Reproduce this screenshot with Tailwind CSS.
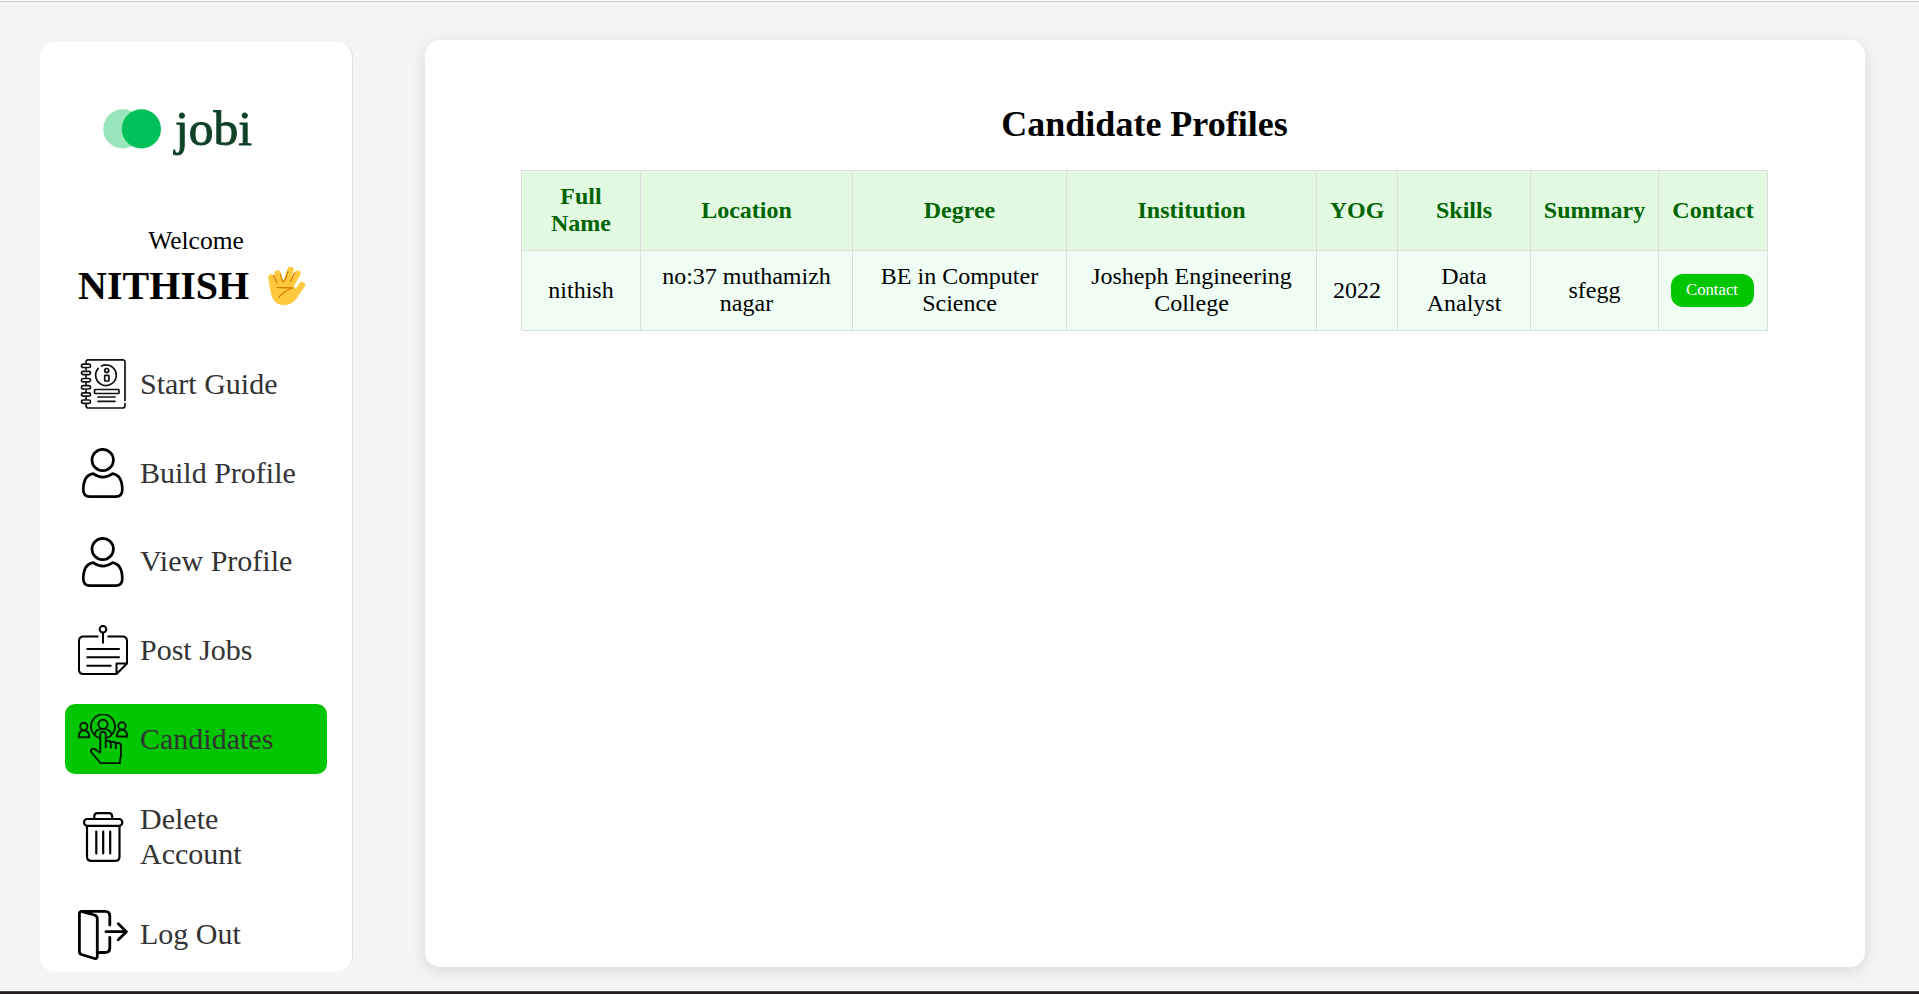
<!DOCTYPE html>
<html lang="en">
<head>
<meta charset="utf-8">
<title>Candidate Profiles</title>
<script src="https://cdn.jsdelivr.net/npm/@tailwindcss/browser@4"></script>
</head>
<body class="h-[994px] overflow-hidden bg-[#f4f4f4] font-['Liberation_Serif','Times_New_Roman',serif] text-black flex flex-col">
<div class="h-0.5 shrink-0 bg-white border-b border-[#c8c8c8]"></div>
<div class="flex flex-1 items-start pl-10">
  <aside class="mt-10 h-[930px] w-[313px] shrink-0 rounded-[15px] border-r border-[#dddddd] bg-white px-[25px]">
    <svg class="mt-[58px] ml-[33px] h-[65px] w-[165px]" viewBox="98 100 165 65">
      <circle cx="122.8" cy="128.9" r="19.6" fill="#99e6bb"/>
      <circle cx="141.4" cy="128.9" r="19.6" fill="#00c05a"/>
      <text x="175" y="144.700" font-size="49" textLength="77" lengthAdjust="spacingAndGlyphs" fill="#0f4129" stroke="#0f4129" stroke-width=".9">jobi</text>
    </svg>
    <div class="mt-[62px] text-center text-[25.500px] leading-[28px]">Welcome</div>
    <div class="mt-[7px] flex h-[46px] items-center pl-[13px]">
      <span class="pt-0.5 text-[40px] leading-[46px] font-bold">NITHISH</span>
      <svg class="ml-[17px] h-[42px] w-[42px]" viewBox="0 0 42 42" fill="none" stroke-linecap="round" stroke-linejoin="round">
        <path d="M5.500 13.500 10 25M11.500 9.500 15 21M19.500 21 24.500 6M25 21 31.500 9.500M29 31 36 21" stroke="#ffc83d" stroke-width="6.300"/>
        <path d="M2.500 14.500C3.500 24 5 31 7 35C10 39.500 13 41 18 41C24 41 28 38 31 34L34 27L28 23L26 17L17 18L8 15Z" fill="#ffc83d"/>
        <path d="M7.700 11.500 10.800 18.500M14.500 10.500 16.500 17.500 18.500 17.300 22 7.500M24.500 17.500 28.500 9" stroke="#d67d00" stroke-width="1.300"/>
        <path d="M11.300 23.300C17 24.300 22 23.300 26.500 24C21.500 26 16.500 29 13 33" stroke="#d67d00" stroke-width="1.300"/>
      </svg>
    </div>
    <nav class="mt-[41px] flex flex-col gap-[18.75px] text-[30px] leading-[34.5px] text-[#333333]">
      <a class="flex h-[70px] w-[262px] items-center gap-3 rounded-[10px] pl-[13px]">
        <svg class="h-[50px] w-[50px] shrink-0" viewBox="0 0 50 50" fill="none" stroke="#111" stroke-width="1.700" stroke-linecap="round" stroke-linejoin="round">
          <path d="M8 5V3Q8 .8 10.500 .8H44.500Q47 .8 47 3V41.500M47 44.500V46.500Q47 49 44.500 49H10.500Q8 49 8 46.500V44.500M8 9.500V11M8 16.500V18.500M8 24V26M8 31V33M8 38V40"/>
          <rect x="3.500" y="5.200" width="9" height="3.300" rx="1.600"/><rect x="3.500" y="12.300" width="9" height="3.300" rx="1.600"/><rect x="3.500" y="19.500" width="9" height="3.300" rx="1.600"/><rect x="3.500" y="26.700" width="9" height="3.300" rx="1.600"/><rect x="3.500" y="33.900" width="9" height="3.300" rx="1.600"/><rect x="3.500" y="41" width="9" height="3.300" rx="1.600"/>
          <path d="M23.500 6.900A10.300 10.300 0 1 1 20.200 9.400"/>
          <circle cx="28.700" cy="11.500" r="2"/><rect x="26.700" y="16.400" width="4.200" height="5.600" rx=".6"/>
          <rect x="16.500" y="30.500" width="24.500" height="4" rx=".8"/><path d="M20 38H37M20 42.300H37"/>
        </svg><span>Start Guide</span>
      </a>
      <a class="flex h-[70px] w-[262px] items-center gap-3 rounded-[10px] pl-[13px]">
        <svg class="h-[50px] w-[50px] shrink-0" viewBox="0 0 50 50" fill="none" stroke="#000" stroke-width="2.700" stroke-linejoin="round">
          <circle cx="24.700" cy="12" r="10.700"/><path d="M15.200 25.700C7 27 5.300 35 5.300 42Q5.300 48.600 12 48.600H37.500Q44.300 48.600 44.300 42C44.300 35 42.500 27 34.500 25.700C31 28 28.500 29.200 24.800 29.200S18.500 28 15.200 25.700Z"/>
        </svg><span>Build Profile</span>
      </a>
      <a class="flex h-[70px] w-[262px] items-center gap-3 rounded-[10px] pl-[13px]">
        <svg class="h-[50px] w-[50px] shrink-0" viewBox="0 0 50 50" fill="none" stroke="#000" stroke-width="2.700" stroke-linejoin="round">
          <circle cx="24.700" cy="12" r="10.700"/><path d="M15.200 25.700C7 27 5.300 35 5.300 42Q5.300 48.600 12 48.600H37.500Q44.300 48.600 44.300 42C44.300 35 42.500 27 34.500 25.700C31 28 28.500 29.200 24.800 29.200S18.500 28 15.200 25.700Z"/>
        </svg><span>View Profile</span>
      </a>
      <a class="flex h-[70px] w-[262px] items-center gap-3 rounded-[10px] pl-[13px]">
        <svg class="h-[50px] w-[50px] shrink-0" viewBox="0 0 50 50" fill="none" stroke="#000" stroke-width="2" stroke-linejoin="round">
          <circle cx="25" cy="4.200" r="3.300"/><path d="M25 7.500V18.500M20.500 11.500H5.500Q1 11.500 1 16V44.500Q1 49 5.500 49H38.500L49 38.500V16Q49 11.500 44.500 11.500H29.500M38.500 49V38.500H49M8.500 24H41.800M8.500 32.300H41.800M8.500 40.700H33.500"/>
        </svg><span>Post Jobs</span>
      </a>
      <a class="flex h-[70px] w-[262px] items-center gap-3 rounded-[10px] bg-[#03c603] pl-[13px]">
        <svg class="h-[50px] w-[50px] shrink-0" viewBox="0 0 50 50" fill="none" stroke="#001a00" stroke-width="1.900" stroke-linejoin="round">
          <circle cx="5.800" cy="12.500" r="3.700"/><path d="M.9 23.300V21.500Q1.500 16.500 5.900 16.300Q10.500 16.500 11.100 21.500V23.300Z"/>
          <circle cx="44" cy="12" r="3.700"/><path d="M38.900 22.500V21Q39.500 16 44 15.800Q48.500 16 49.100 21V22.500Z"/>
          <path d="M21.500 23.900A12 12 0 1 1 28.500 23.900"/>
          <circle cx="25" cy="10.300" r="4.600"/><path d="M16.500 20.500C17.500 16.500 20.500 14.900 25 14.900S32.500 16.500 33.500 20.500"/>
          <path d="M22.300 39V20.500Q22.300 17.800 25 17.800T27.700 20.500V34M27.700 27H30.500Q32.800 27 32.800 29.500V34.500M32.800 28H35.500Q37.800 28 37.800 30.500V35M37.800 29H40Q43 29 43 32V41.500L42 46V49.100H22.500L13.500 38.500Q12.200 36.500 13.800 35.200Q15.300 34.100 17.500 35.500L22.300 39"/>
        </svg><span>Candidates</span>
      </a>
      <a class="flex h-[88px] w-[262px] items-center gap-3 rounded-[10px] pl-[13px]">
        <svg class="h-[50px] w-[50px] shrink-0" viewBox="0 0 50 50" fill="none" stroke="#000" stroke-width="2.200" stroke-linecap="round" stroke-linejoin="round">
          <path d="M16.300 7V4.500Q16.300 1.100 19.500 1.100H31Q34.200 1.100 34.200 4.500V7"/><rect x="6" y="7" width="38.300" height="6.800" rx="3.400"/>
          <path d="M9 14V44.500Q9 48.900 13.500 48.900H37Q41.500 48.900 41.500 44.500V14M18.300 19.500V41.500M25.200 19.500V41.500M32.200 19.500V41.500"/>
        </svg><span>Delete<br>Account</span>
      </a>
      <a class="flex h-[70px] w-[262px] items-center gap-3 rounded-[10px] pl-[13px]">
        <svg class="h-[50px] w-[50px] shrink-0" viewBox="0 0 50 50" fill="none" stroke="#000" stroke-width="2.800" stroke-linecap="round" stroke-linejoin="round">
          <path d="M4 1.600 16.500 5Q19.300 6 19.300 9V46Q19.300 49.200 16.500 48.500L3.500 44.500Q1.400 43.800 1.400 41.500V4Q1.400 1.400 4 1.400H27Q31.800 1.400 31.800 6V15M31.800 27.500V38Q31.800 42.500 27 42.500H20M28 21.700H48.300M40.300 13.700 48.400 21.700 40.300 29.700"/>
        </svg><span>Log Out</span>
      </a>
    </nav>
  </aside>
  <main class="mt-[38px] ml-[72px] h-[927px] w-[1440px] rounded-[15px] bg-white pt-[64px] pl-24 shadow-[0_4px_16px_rgba(0,0,0,0.11)]">
    <h1 class="w-[1247px] text-center text-[36px] leading-[41px] font-bold">Candidate Profiles</h1>
    <table class="mt-[25px] w-[1247px] table-fixed border-collapse text-center text-[24px] leading-[27px]">
      <colgroup><col class="w-[119px]"><col class="w-[212px]"><col class="w-[214px]"><col class="w-[250px]"><col class="w-[81px]"><col class="w-[133px]"><col class="w-[128px]"><col class="w-[109px]"></colgroup>
      <thead>
        <tr class="h-20 bg-[#e2fae2] text-[#006400]">
          <th class="border border-[#dddddd] pb-0.5">Full<br>Name</th><th class="border border-[#dddddd]">Location</th><th class="border border-[#dddddd]">Degree</th><th class="border border-[#dddddd]">Institution</th><th class="border border-[#dddddd]">YOG</th><th class="border border-[#dddddd]">Skills</th><th class="border border-[#dddddd]">Summary</th><th class="border border-[#dddddd]">Contact</th>
        </tr>
      </thead>
      <tbody>
        <tr class="h-20 bg-[#f0fdf5]">
          <td class="border border-[#dddddd]">nithish</td><td class="border border-[#dddddd] pb-0.5">no:37 muthamizh<br>nagar</td><td class="border border-[#dddddd] pb-0.5">BE in Computer<br>Science</td><td class="border border-[#dddddd] pb-0.5">Josheph Engineering<br>College</td><td class="border border-[#dddddd]">2022</td><td class="border border-[#dddddd] pb-0.5">Data<br>Analyst</td><td class="border border-[#dddddd]">sfegg</td>
          <td class="border border-[#dddddd] pr-0.5"><button class="mx-auto block h-[33px] w-[83px] rounded-[12px] bg-[#03c603] pb-0.5 text-[16.700px] leading-[19px] text-white">Contact</button></td>
        </tr>
      </tbody>
    </table>
  </main>
</div>
<div class="h-[3px] shrink-0 border-t border-[#4a4548] bg-[#231f22]"></div>
</body>
</html>
